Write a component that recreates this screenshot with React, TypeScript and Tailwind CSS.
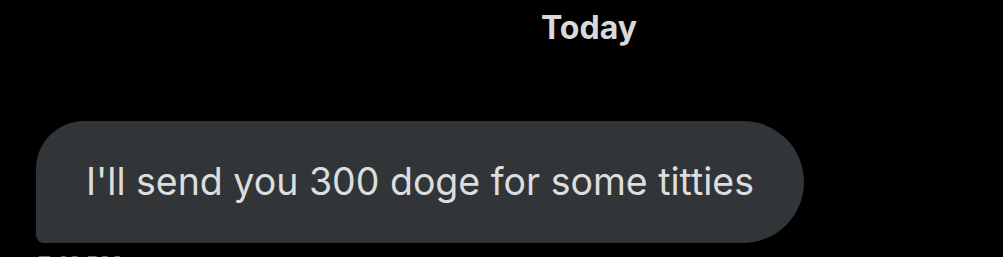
export default function App() {
  return (
    <main
      className="h-[257px] w-full overflow-hidden bg-black"
      style={{ fontFamily: 'Inter, "Noto Sans", sans-serif' }}
    >
      <div className="pt-[9px] pl-[541px]">
        <span className="text-[32px] leading-[37px] font-bold text-[#d9d9d9]">Today</span>
      </div>

      <div className="mt-[75px] pl-[36px]">
        <div className="inline-flex h-[122px] items-center rounded-[48px] rounded-bl-[8px] rounded-r-[61px] bg-[#323538] pl-[50px] pr-[50px]">
          <p className="text-[37.5px] leading-none text-[#dcdddf] whitespace-nowrap">
            I'll send you 300 doge for some titties
          </p>
        </div>
        <div className="pt-[10px] pl-[2px] text-[22px] font-bold leading-none text-[#6e767d]">
          7:16 PM
        </div>
      </div>
    </main>
  );
}
